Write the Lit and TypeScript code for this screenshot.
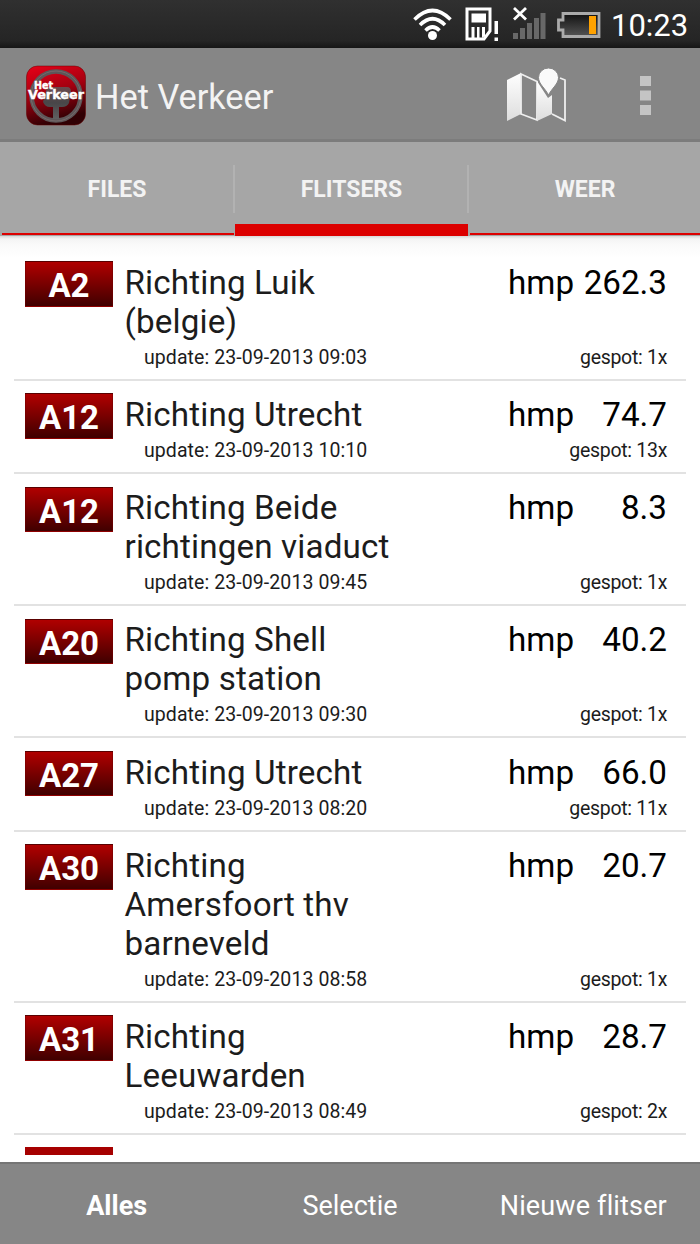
import { LitElement, html, css, svg } from "lit";
import { customElement } from "lit/decorators.js";

interface Item { road: string; lines: string[]; time: string; hmp: string; seen: number; }

const items: Item[] = [
  { road: "A2", lines: ["Richting Luik", "(belgie)"], time: "09:03", hmp: "262.3", seen: 1 },
  { road: "A12", lines: ["Richting Utrecht"], time: "10:10", hmp: "74.7", seen: 13 },
  { road: "A12", lines: ["Richting Beide", "richtingen viaduct"], time: "09:45", hmp: "8.3", seen: 1 },
  { road: "A20", lines: ["Richting Shell", "pomp station"], time: "09:30", hmp: "40.2", seen: 1 },
  { road: "A27", lines: ["Richting Utrecht"], time: "08:20", hmp: "66.0", seen: 11 },
  { road: "A30", lines: ["Richting", "Amersfoort thv", "barneveld"], time: "08:58", hmp: "20.7", seen: 1 },
  { road: "A31", lines: ["Richting", "Leeuwarden"], time: "08:49", hmp: "28.7", seen: 2 },
];

const statusIcons = svg`
  <g fill="none" stroke="#fff" stroke-width="3.6">
    <path d="M14.5 19.5Q32.500 1.500 50.500 19.500"/>
    <path d="M20 25Q32.500 12.500 45 25"/>
    <path d="M25.500 30.500Q32.500 23.500 39.500 30.500"/>
  </g>
  <circle cx="32.500" cy="35.500" r="4.500" fill="#fff"/>
  <path d="M67 9H90V31L84 39H67Z" fill="none" stroke="#fff" stroke-width="3"/>
  <path d="M71.500 13.500H86V22.500H71.500ZM71.500 27H74.500V38H71.500ZM77 27H79.500V38H77ZM82 27H85V36L82 38Z" fill="#fff"/>
  <path d="M94.500 21H98V34H94.500ZM94.500 37.500H98V41H94.500Z" fill="#fff"/>
  <path d="M114 8L126 19.500M126 8L114 19.500" stroke="#fff" stroke-width="2.800"/>
  <path d="M113 33h5v6h-5zM120 28h5v11h-5zM127 23h5v16h-5zM134 18h5v21h-5zM140.500 13h5v26h-5z" fill="#686868"/>
  <path d="M163 13.500H199V36.500H163V30H158.500V20H163Z" fill="url(#cell)" stroke="#aaa" stroke-width="2.800"/>
  <path d="M189 16H196V34H189Z" fill="#ffa200"/>`;

@customElement("app-root")
export class AppRoot extends LitElement {
  static styles = css`
    :host { display: flex; flex-direction: column; width: 700px; height: 1244px; overflow: hidden; background: #fff; font-family: Roboto, sans-serif; color: #1c1c1c; }
    * { box-sizing: border-box; }
    svg { display: block; flex: none; overflow: visible; }
    .status { height: 48px; flex: none; background: linear-gradient(#303030, #252525 85%, #161616); display: flex; justify-content: flex-end; color: #fff; padding-right: 11px; }
    .clock { font-size: 31px; line-height: 51px; white-space: pre; width: 78px; }
    .bar { height: 94px; flex: none; background: #868686; border-bottom: 3px solid #7c7c7c; display: flex; align-items: center; padding-left: 25px; }
    .icon { margin-top: 5px; }
    .title { font-size: 34.300px; color: #f3f3f3; margin-left: 8px; flex: 1; white-space: pre; line-height: 42px; padding-top: 7px; }
    .tabs { height: 94px; flex: none; background: #a6a6a6; display: grid; grid-template-columns: 235px 234px 231px; }
    .tab { display: grid; grid-template-rows: 1fr auto; text-align: center; font-weight: 700; font-size: 23px; color: #f3f3f3; }
    .label { line-height: 50px; margin-top: 23px; height: 48px; padding-left: 1px; border-right: 2px solid #b2b2b2; }
    .tab:last-child .label { border: 0; }
    .line { height: 2.500px; background: #dc0000; margin: 0 2px 1px; }
    .tab:first-child .line { margin-right: 1px; }
    .tab:last-child .line { margin-left: 1px; margin-right: 0; }
    .on .line { height: 12px; margin: 0 1px 0 0; }
    .list { flex: 1; min-height: 0; overflow: hidden; padding: 12.500px 14px 0; background: linear-gradient(#d8d8d8, #f4f4f4 3px, #fafafa 9px, #fff 22px); }
    .row { display: grid; grid-template-columns: 88px 1fr auto; column-gap: 11.500px; padding: 12.500px 19px 0 11px; border-bottom: 2px solid #e2e2e2; }
    .badge { height: 45.500px; margin-bottom: -8px; background: linear-gradient(#b00000, #a00000 15%, #400000); border: 1px solid #71000080; color: #fff; font-weight: 700; font-size: 33px; line-height: 47px; text-align: center; white-space: pre; }
    .where { font-size: 33.200px; line-height: 38.900px; padding-top: 2.600px; margin-bottom: -0.600px; letter-spacing: 0.140px; white-space: pre; }
    .hmp { font-size: 33.200px; line-height: 38.900px; padding-top: 2.600px; margin-bottom: -0.600px; color: #000; display: flex; justify-content: space-between; width: 159px; white-space: pre; }
    .meta { grid-column: 1 / -1; display: flex; justify-content: space-between; font-size: 19.500px; line-height: 23px; padding: 4.900px 0 10px 119px; white-space: pre; }
    .when { letter-spacing: 0.080px; }
    .seen { letter-spacing: -0.300px; }
    .peek { margin: 12px 11px 0; width: 88px; height: 8px; background: #a60000; }
    .foot { height: 82px; flex: none; background: #868686; border-top: 2px solid #757575; color: #fff; font-size: 27px; display: grid; grid-template-columns: repeat(3, 1fr); text-align: center; line-height: 84px; white-space: pre; }
    .foot span:last-child { letter-spacing: 0.150px; }
    .b { font-weight: 700; }
  `;

  render() {
    return html`
      <div class="status">
        <svg width="211" height="48" viewBox="0 0 211 48">
          <defs><linearGradient id="cell" x2="0" y2="1"><stop stop-color="#111"/><stop offset="1" stop-color="#555"/></linearGradient></defs>
          ${statusIcons}
        </svg>
        <span class="clock">10:23</span>
      </div>
      <div class="bar">
        <svg class="icon" width="62" height="62" viewBox="0 0 62 62">
          <defs>
            <linearGradient id="red" x2="0.3" y2="1"><stop stop-color="#e80018"/><stop offset="0.5" stop-color="#a50010"/><stop offset="1" stop-color="#300004"/></linearGradient>
            <linearGradient id="hub" x2="0" y2="1"><stop stop-color="#6b4a4e"/><stop offset="0.5" stop-color="#484648"/><stop offset="1" stop-color="#606060"/></linearGradient>
          </defs>
          <rect x="1.500" y="1" width="59" height="59" rx="11" fill="url(#red)" stroke="#600" stroke-width="0.500"/>
          <circle cx="31" cy="31" r="24.500" fill="none" stroke="#5e5658" stroke-width="4.500"/>
          <circle cx="31" cy="31" r="25" fill="none" stroke="#75696b" stroke-width="1"/>
          <path d="M22 22H42Q46 22 46 27L44 38Q42 42 37 42H34V54H28V42H25Q20 42 18 37Z" fill="url(#hub)"/>
          <g fill="#fff" stroke="#fff" stroke-width="0.400" font-family="DejaVu Sans" font-weight="bold">
            <text x="9" y="24" font-size="10.500" textLength="19" lengthAdjust="spacingAndGlyphs">Het</text>
            <text x="3" y="33.500" font-size="13" textLength="56" lengthAdjust="spacingAndGlyphs">Verkeer</text>
          </g>
        </svg>
        <span class="title">Het Verkeer</span>
        <svg class="icon" width="194" height="62" viewBox="506 64 194 62">
          <defs><linearGradient id="map" x2="0" y2="1"><stop stop-color="#fff"/><stop offset="1" stop-color="#ddd"/></linearGradient></defs>
          <path d="M507 79L521 72V113L507 120Z" fill="url(#map)"/>
          <path d="M521 73L537 80.500V119L521 113ZM552 113L565 119.500V79L560 77" fill="none" stroke="#eee" stroke-width="1.800"/>
          <path d="M537 80L548 97L552 94V113L537 120Z" fill="url(#map)"/>
          <path d="M548.500 94C545 87 538.500 83 538.500 76.500A10 9.500 0 0 1 558.500 76.500C558.500 83 552 87 548.500 94Z" fill="#fafafa" stroke="#868686" stroke-width="1"/>
          <path d="M640 75h11v10h-11zM640 89.500h11v10h-11zM640 104h11v10h-11z" fill="#c4c4c4"/>
        </svg>
      </div>
      <div class="tabs">
        ${["FILES", "FLITSERS", "WEER"].map((t, i) => html`<div class="tab ${i === 1 ? "on" : ""}"><div class="label">${t}</div><div class="line"></div></div>`)}
      </div>
      <div class="list">
        ${items.map((r) => html`
          <div class="row">
            <div class="badge">${r.road}</div>
            <div class="where">${r.lines.map((l) => html`<div>${l}</div>`)}</div>
            <div class="hmp"><span>hmp</span><span>${r.hmp}</span></div>
            <div class="meta"><span class="when">update: 23-09-2013 ${r.time}</span><span class="seen">gespot: ${r.seen}x</span></div>
          </div>`)}
        <div class="peek"></div>
      </div>
      <div class="foot"><span class="b">Alles</span><span>Selectie</span><span>Nieuwe flitser</span></div>
    `;
  }
}
